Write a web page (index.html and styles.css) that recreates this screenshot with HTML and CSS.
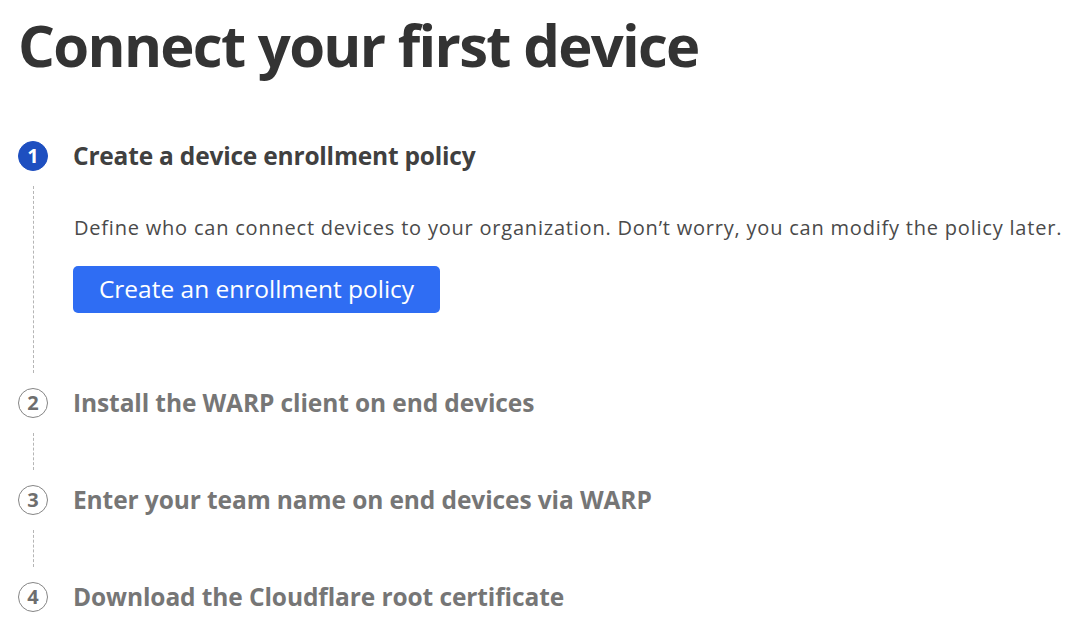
FILE: index.html
```html
<!DOCTYPE html>
<html lang="en">
<head>
<meta charset="utf-8">
<title>Connect your first device</title>
<link rel="stylesheet" href="styles.css">
</head>
<body>
<main class="page">
  <h1 class="title">Connect your first device</h1>
  <ol class="steps">
    <li class="step step-active">
      <div class="step-head">
        <span class="step-num">1</span>
        <h2 class="step-title">Create a device enrollment policy</h2>
      </div>
      <div class="step-body">
        <p class="step-desc">Define who can connect devices to your organization. Don’t worry, you can modify the policy later.</p>
        <button class="btn-primary" type="button">Create an enrollment policy</button>
      </div>
    </li>
    <li class="step">
      <div class="step-head">
        <span class="step-num">2</span>
        <h2 class="step-title">Install the WARP client on end devices</h2>
      </div>
      <div class="step-body step-body-empty"></div>
    </li>
    <li class="step">
      <div class="step-head">
        <span class="step-num">3</span>
        <h2 class="step-title">Enter your team name on end devices via WARP</h2>
      </div>
      <div class="step-body step-body-empty"></div>
    </li>
    <li class="step">
      <div class="step-head">
        <span class="step-num">4</span>
        <h2 class="step-title">Download the Cloudflare root certificate</h2>
      </div>
    </li>
  </ol>
</main>
</body>
</html>
```

FILE: styles.css
```css
* { box-sizing: border-box; }
html, body { margin: 0; padding: 0; background: #fff; }
body {
  font-family: "Open Sans", "Noto Sans", "Liberation Sans", sans-serif;
  color: #333;
}
.page {
  padding: 0 0 0 18px;
}
.title {
  margin: 0;
  padding-top: 10px;
  font-size: 58px;
  line-height: 70px;
  font-weight: 700;
  color: #333;
  letter-spacing: -1.7px;
}
.steps {
  list-style: none;
  margin: 0;
  padding: 0;
  margin-top: 61px;
}
.step { display: flex; flex-direction: column; }
.step-head {
  display: flex;
  align-items: center;
  gap: 25px;
  height: 30px;
}
.step-num {
  flex: none;
  width: 30px;
  height: 30px;
  border-radius: 50%;
  border: 1.2px solid #858585;
  color: #6e6e6e;
  display: flex;
  align-items: center;
  justify-content: center;
  font-size: 20px;
  font-weight: 700;
  line-height: 1;
  padding-bottom: 1px;
}
.step-active .step-num {
  background: #1e4fc0;
  border-color: #1e4fc0;
  color: #fff;
}
.step-title {
  margin: 0;
  font-size: 24.5px;
  line-height: 30px;
  font-weight: 700;
  color: #767676;
  letter-spacing: -0.1px;
}
.step-active .step-title { color: #404040; letter-spacing: -0.2px; }
.step-body {
  margin: 15px 0 15px 15px;
  border-left: 1px dashed #b5b5b5;
  padding: 30px 0 60px 39px;
}
.step-body-empty {
  height: 37px;
  padding: 0;
}
.step-desc {
  margin: 0 0 26px 1px;
  font-size: 20px;
  line-height: 24px;
  color: #4a4a4a;
  letter-spacing: 0.79px;
  white-space: nowrap;
}
.btn-primary {
  display: block;
  font-family: inherit;
  font-size: 24.5px;
  line-height: 30px;
  color: #fff;
  background: #2f6df3;
  border: none;
  border-radius: 5px;
  padding: 8px 0 9px;
  width: 367px;
  cursor: pointer;
}
```
